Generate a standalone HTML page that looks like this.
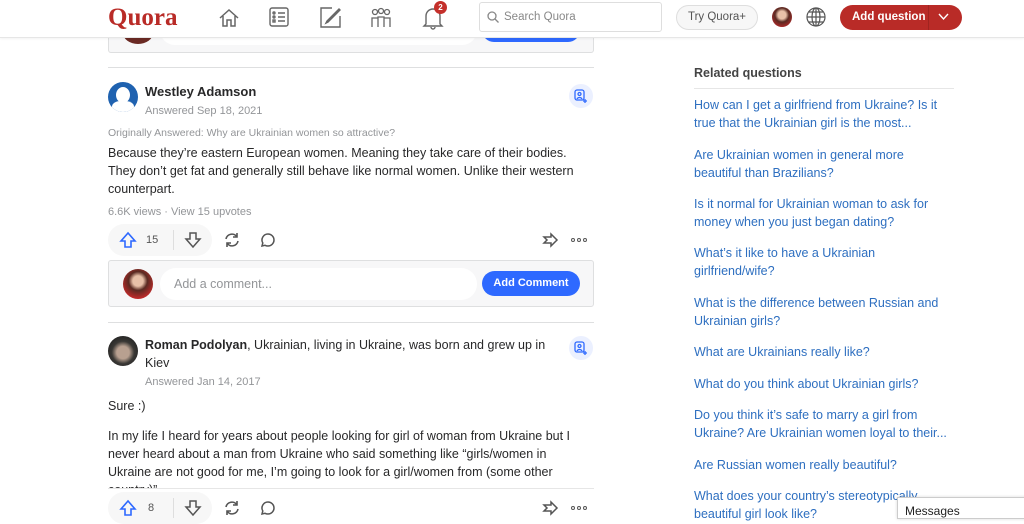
<!DOCTYPE html>
<html><head><meta charset="utf-8"><style>
*{margin:0;padding:0;box-sizing:border-box}
body{width:1024px;height:516px;overflow:hidden;background:#fff;font-family:"Liberation Sans",Arial,sans-serif;color:#282829;position:relative}
.a{position:absolute;white-space:nowrap}
.hdr{position:absolute;left:0;top:0;width:1024px;height:38px;background:#fff;border-bottom:1px solid #e6e6e6;box-shadow:0 1px 2px rgba(0,0,0,.05);z-index:5}
.t{font-size:12.5px;color:#282829}
.g{font-size:11px;color:#939598}
.l{font-size:12.5px;color:#2e6fc0;line-height:18px}
.hr{position:absolute;height:1px;background:#dedfe0}
.circ{position:absolute;border-radius:50%}
svg{position:absolute}
.dots{position:absolute;width:16px;height:5px}
.dots i{position:absolute;top:0;width:4px;height:4px;border:1.3px solid #555;border-radius:50%}
</style></head><body>

<div class="hdr">
 <div class="a" style="left:108px;top:4px;font-family:'Liberation Serif',serif;font-weight:bold;font-size:25px;color:#b92b27">Quora</div>
 <svg style="left:218px;top:7px" width="22" height="22" viewBox="0 0 22 22" fill="none" stroke="#666" stroke-width="1.5"><path d="M2 11L11 3l9 8M5 9v10h4v-6h4v6h4V9"/></svg>
 <svg style="left:269px;top:7px" width="20" height="20" viewBox="0 0 20 20" fill="none" stroke="#666" stroke-width="1.4"><rect x="1" y="1" width="18" height="18" rx="2"/><path d="M9 6h7M9 10h7M9 14h7"/><circle cx="5" cy="6" r="1"/><circle cx="5" cy="10" r="1"/><rect x="4" y="13" width="2" height="2"/></svg>
 <svg style="left:320px;top:7px" width="21" height="21" viewBox="0 0 21 21" fill="none" stroke="#666" stroke-width="1.4"><path d="M12 1H1v19h19V9"/><path d="M19 2L7 14l-1 2 2-1L20 3z"/></svg>
 <svg style="left:370px;top:7px" width="22" height="22" viewBox="0 0 22 22" fill="none" stroke="#666" stroke-width="1.3"><circle cx="5" cy="5" r="2.5"/><circle cx="11" cy="4" r="2.5"/><circle cx="17" cy="5" r="2.5"/><path d="M2 20v-9h6v9M8 20v-10h6v10M14 20v-9h6v9"/></svg>
 <svg style="left:422px;top:6px" width="22" height="24" viewBox="0 0 22 24" fill="none" stroke="#666" stroke-width="1.4"><path d="M4 18V10a7 7 0 0114 0v8l2 2H2zM9 21a2 2 0 004 0"/></svg>
 <div class="circ" style="left:434px;top:1px;width:13px;height:13px;background:#c4302b;color:#fff;font-size:8px;font-weight:bold;text-align:center;line-height:13px">2</div>
 <div class="a" style="left:479px;top:2px;width:183px;height:30px;border:1px solid #dedede;border-radius:3px"></div>
 <svg style="left:487px;top:11px" width="12" height="12" viewBox="0 0 12 12" fill="none" stroke="#888" stroke-width="1.3"><circle cx="5" cy="5" r="4"/><path d="M8 8l3.5 3.5"/></svg>
 <div class="a" style="left:504px;top:11px;font-size:11.5px;color:#888">Search Quora</div>
 <div class="a" style="left:676px;top:5px;width:82px;height:25px;border:1px solid #dedede;border-radius:13px;background:#f7f7f7;font-size:11.5px;color:#555;text-align:center;line-height:23px">Try Quora+</div>
 <div class="circ" style="left:772px;top:7px;width:20px;height:20px;background:radial-gradient(circle at 50% 40%,#e8c0a8 25%,#5a2a22 45%,#b02a2a 80%)"></div>
 <svg style="left:806px;top:7px" width="20" height="20" viewBox="0 0 20 20" fill="none" stroke="#555" stroke-width="1.2"><circle cx="10" cy="10" r="9"/><ellipse cx="10" cy="10" rx="4" ry="9"/><path d="M1 10h18M3 5h14M3 15h14M10 1v18"/></svg>
 <div class="a" style="left:840px;top:5px;width:122px;height:25px;border-radius:13px;background:#b92b27;color:#fff;font-size:11.5px;font-weight:bold;line-height:25px;padding-left:12px">Add question</div>
 <div class="a" style="left:928px;top:5px;width:1px;height:25px;background:#a02420"></div>
 <svg style="left:938px;top:13px" width="11" height="8" viewBox="0 0 11 8" fill="none" stroke="#fff" stroke-width="1.4"><path d="M1 1l4.5 5L10 1"/></svg>
</div>

<div class="a" style="left:108px;top:30px;width:486px;height:23px;border:1px solid #dedfe0;border-top:none;background:#f7f7f8;border-radius:0 0 3px 3px"></div>
<div class="circ" style="left:123px;top:22px;width:30px;height:22px;background:#6a2a24"></div>
<div class="a" style="left:160px;top:30px;width:317px;height:15px;background:#fff;border-radius:0 0 16px 16px"></div>
<div class="a" style="left:482px;top:30px;width:98px;height:12px;background:#2e69ff;border-radius:0 0 12px 12px"></div>

<div class="hr" style="left:108px;top:67px;width:486px"></div>

<div class="circ" style="left:108px;top:82px;width:30px;height:30px;background:#1f62b0;overflow:hidden"><div class="circ" style="left:8px;top:5px;width:14px;height:16px;background:#fff"></div><div class="a" style="left:4px;top:19px;width:22px;height:14px;background:#fff;border-radius:40% 40% 0 0"></div></div>
<div class="a" style="left:145px;top:84px;font-size:13px;font-weight:bold">Westley Adamson</div>
<div class="a g" style="left:145px;top:105px">Answered Sep 18, 2021</div>
<div class="circ" style="left:569px;top:84px;width:24px;height:24px;background:#ebf0ff"></div>
<svg style="left:574px;top:89px" width="14" height="14" viewBox="0 0 14 14" fill="none" stroke="#2e69ff" stroke-width="1.3"><rect x="1" y="1" width="9" height="10" rx="2"/><circle cx="5.5" cy="5" r="1.5"/><path d="M3 10c1-2 4-2 5 0M11 10v4M9 12h4"/></svg>
<div class="a g" style="left:108px;top:127px;font-size:10.5px">Originally Answered: Why are Ukrainian women so attractive?</div>
<div class="a t" style="left:108px;top:146px">Because they’re eastern European women. Meaning they take care of their bodies.</div>
<div class="a t" style="left:108px;top:164px">They don’t get fat and generally still behave like normal women. Unlike their western</div>
<div class="a t" style="left:108px;top:182px">counterpart.</div>
<div class="a g" style="left:108px;top:206px">6.6K views · View 15 upvotes</div>

<div class="a" style="left:108px;top:224px;width:104px;height:32px;border-radius:16px;background:#f7f7f7"></div>
<div class="a" style="left:173px;top:230px;width:1px;height:20px;background:#dedede"></div>
<svg style="left:119px;top:231px" width="18" height="18" viewBox="0 0 18 18" fill="none" stroke="#2e69ff" stroke-width="1.6"><path d="M9 2L2 10h4v6h6v-6h4z"/></svg>
<div class="a" style="left:146px;top:234px;font-size:11px;color:#555">15</div>
<svg style="left:184px;top:231px" width="18" height="18" viewBox="0 0 18 18" fill="none" stroke="#555" stroke-width="1.5"><path d="M9 16L2 8h4V2h6v6h4z"/></svg>
<svg style="left:223px;top:231px" width="18" height="18" viewBox="0 0 18 18" fill="none" stroke="#555" stroke-width="1.6"><path d="M3 8a6 6 0 0111-2M15 10a6 6 0 01-11 2M14 2v4h-4M4 16v-4h4"/></svg>
<svg style="left:260px;top:232px" width="16" height="16" viewBox="0 0 16 16" fill="none" stroke="#555" stroke-width="1.5"><path d="M8 2a6 6 0 110 12c-1 0-2-.2-3-.7L2 14l.8-3A6 6 0 018 2z"/></svg>
<svg style="left:541px;top:231px" width="18" height="18" viewBox="0 0 18 18" fill="none" stroke="#555" stroke-width="1.5"><path d="M10 3l6 6-6 6v-3H3l3-3-3-3h7z"/></svg>
<div class="dots" style="left:571px;top:238px"><i style="left:0"></i><i style="left:6px"></i><i style="left:12px"></i></div>

<div class="a" style="left:108px;top:260px;width:486px;height:47px;border:1px solid #dedfe0;background:#f7f7f8;border-radius:3px"></div>
<div class="circ" style="left:123px;top:269px;width:30px;height:30px;background:radial-gradient(circle at 50% 40%,#e8c0a8 22%,#5a2a22 40%,#c02a2a 75%)"></div>
<div class="a" style="left:160px;top:268px;width:317px;height:32px;background:#fff;border-radius:16px"></div>
<div class="a" style="left:174px;top:277px;font-size:12.5px;color:#939598">Add a comment...</div>
<div class="a" style="left:482px;top:271px;width:98px;height:25px;background:#2e69ff;border-radius:13px;color:#fff;font-size:11px;font-weight:bold;text-align:center;line-height:25px">Add Comment</div>

<div class="hr" style="left:108px;top:322px;width:486px"></div>

<div class="circ" style="left:108px;top:336px;width:30px;height:30px;background:radial-gradient(circle at 50% 55%,#b8a090 28%,#3a3835 50%,#222 80%)"></div>
<div class="a t" style="left:145px;top:338px"><b>Roman Podolyan</b>, Ukrainian, living in Ukraine, was born and grew up in</div>
<div class="a t" style="left:145px;top:356px">Kiev</div>
<div class="circ" style="left:569px;top:336px;width:24px;height:24px;background:#ebf0ff"></div>
<svg style="left:574px;top:341px" width="14" height="14" viewBox="0 0 14 14" fill="none" stroke="#2e69ff" stroke-width="1.3"><rect x="1" y="1" width="9" height="10" rx="2"/><circle cx="5.5" cy="5" r="1.5"/><path d="M3 10c1-2 4-2 5 0M11 10v4M9 12h4"/></svg>
<div class="a g" style="left:145px;top:376px">Answered Jan 14, 2017</div>
<div class="a t" style="left:108px;top:399px">Sure :)</div>
<div class="a t" style="left:108px;top:429px">In my life I heard for years about people looking for girl of woman from Ukraine but I</div>
<div class="a t" style="left:108px;top:447px">never heard about a man from Ukraine who said something like “girls/women in</div>
<div class="a t" style="left:108px;top:465px">Ukraine are not good for me, I’m going to look for a girl/women from (some other</div>
<div class="a t" style="left:108px;top:483px;height:5px;overflow:hidden">country)”</div>
<div class="hr" style="left:108px;top:488px;width:486px;background:#e6e6e6"></div>
<div class="a" style="left:108px;top:492px;width:104px;height:32px;border-radius:16px;background:#f7f7f7"></div>
<div class="a" style="left:173px;top:498px;width:1px;height:20px;background:#dedede"></div>
<svg style="left:119px;top:499px" width="18" height="18" viewBox="0 0 18 18" fill="none" stroke="#2e69ff" stroke-width="1.6"><path d="M9 2L2 10h4v6h6v-6h4z"/></svg>
<div class="a" style="left:148px;top:502px;font-size:11px;color:#555">8</div>
<svg style="left:184px;top:499px" width="18" height="18" viewBox="0 0 18 18" fill="none" stroke="#555" stroke-width="1.5"><path d="M9 16L2 8h4V2h6v6h4z"/></svg>
<svg style="left:223px;top:499px" width="18" height="18" viewBox="0 0 18 18" fill="none" stroke="#555" stroke-width="1.6"><path d="M3 8a6 6 0 0111-2M15 10a6 6 0 01-11 2M14 2v4h-4M4 16v-4h4"/></svg>
<svg style="left:260px;top:500px" width="16" height="16" viewBox="0 0 16 16" fill="none" stroke="#555" stroke-width="1.5"><path d="M8 2a6 6 0 110 12c-1 0-2-.2-3-.7L2 14l.8-3A6 6 0 018 2z"/></svg>
<svg style="left:541px;top:499px" width="18" height="18" viewBox="0 0 18 18" fill="none" stroke="#555" stroke-width="1.5"><path d="M10 3l6 6-6 6v-3H3l3-3-3-3h7z"/></svg>
<div class="dots" style="left:571px;top:506px"><i style="left:0"></i><i style="left:6px"></i><i style="left:12px"></i></div>

<div class="a" style="left:694px;top:66px;font-size:12.5px;font-weight:bold;color:#444">Related questions</div>
<div class="hr" style="left:694px;top:88px;width:260px;background:#e6e6e6"></div>
<div class="a l" style="left:694px;top:96px">How can I get a girlfriend from Ukraine? Is it<br>true that the Ukrainian girl is the most...</div>
<div class="a l" style="left:694px;top:146px">Are Ukrainian women in general more<br>beautiful than Brazilians?</div>
<div class="a l" style="left:694px;top:195px">Is it normal for Ukrainian woman to ask for<br>money when you just began dating?</div>
<div class="a l" style="left:694px;top:244px">What’s it like to have a Ukrainian<br>girlfriend/wife?</div>
<div class="a l" style="left:694px;top:294px">What is the difference between Russian and<br>Ukrainian girls?</div>
<div class="a l" style="left:694px;top:343px">What are Ukrainians really like?</div>
<div class="a l" style="left:694px;top:375px">What do you think about Ukrainian girls?</div>
<div class="a l" style="left:694px;top:406px">Do you think it’s safe to marry a girl from<br>Ukraine? Are Ukrainian women loyal to their...</div>
<div class="a l" style="left:694px;top:456px">Are Russian women really beautiful?</div>
<div class="a l" style="left:694px;top:487px">What does your country’s stereotypically<br>beautiful girl look like?</div>
<div class="a" style="left:897px;top:497px;width:130px;height:22px;background:#fff;border:1px solid #ccc;box-shadow:0 0 3px rgba(0,0,0,.15);font-size:12px;color:#222;padding:6px 0 0 7px">Messages</div>
</body></html>
